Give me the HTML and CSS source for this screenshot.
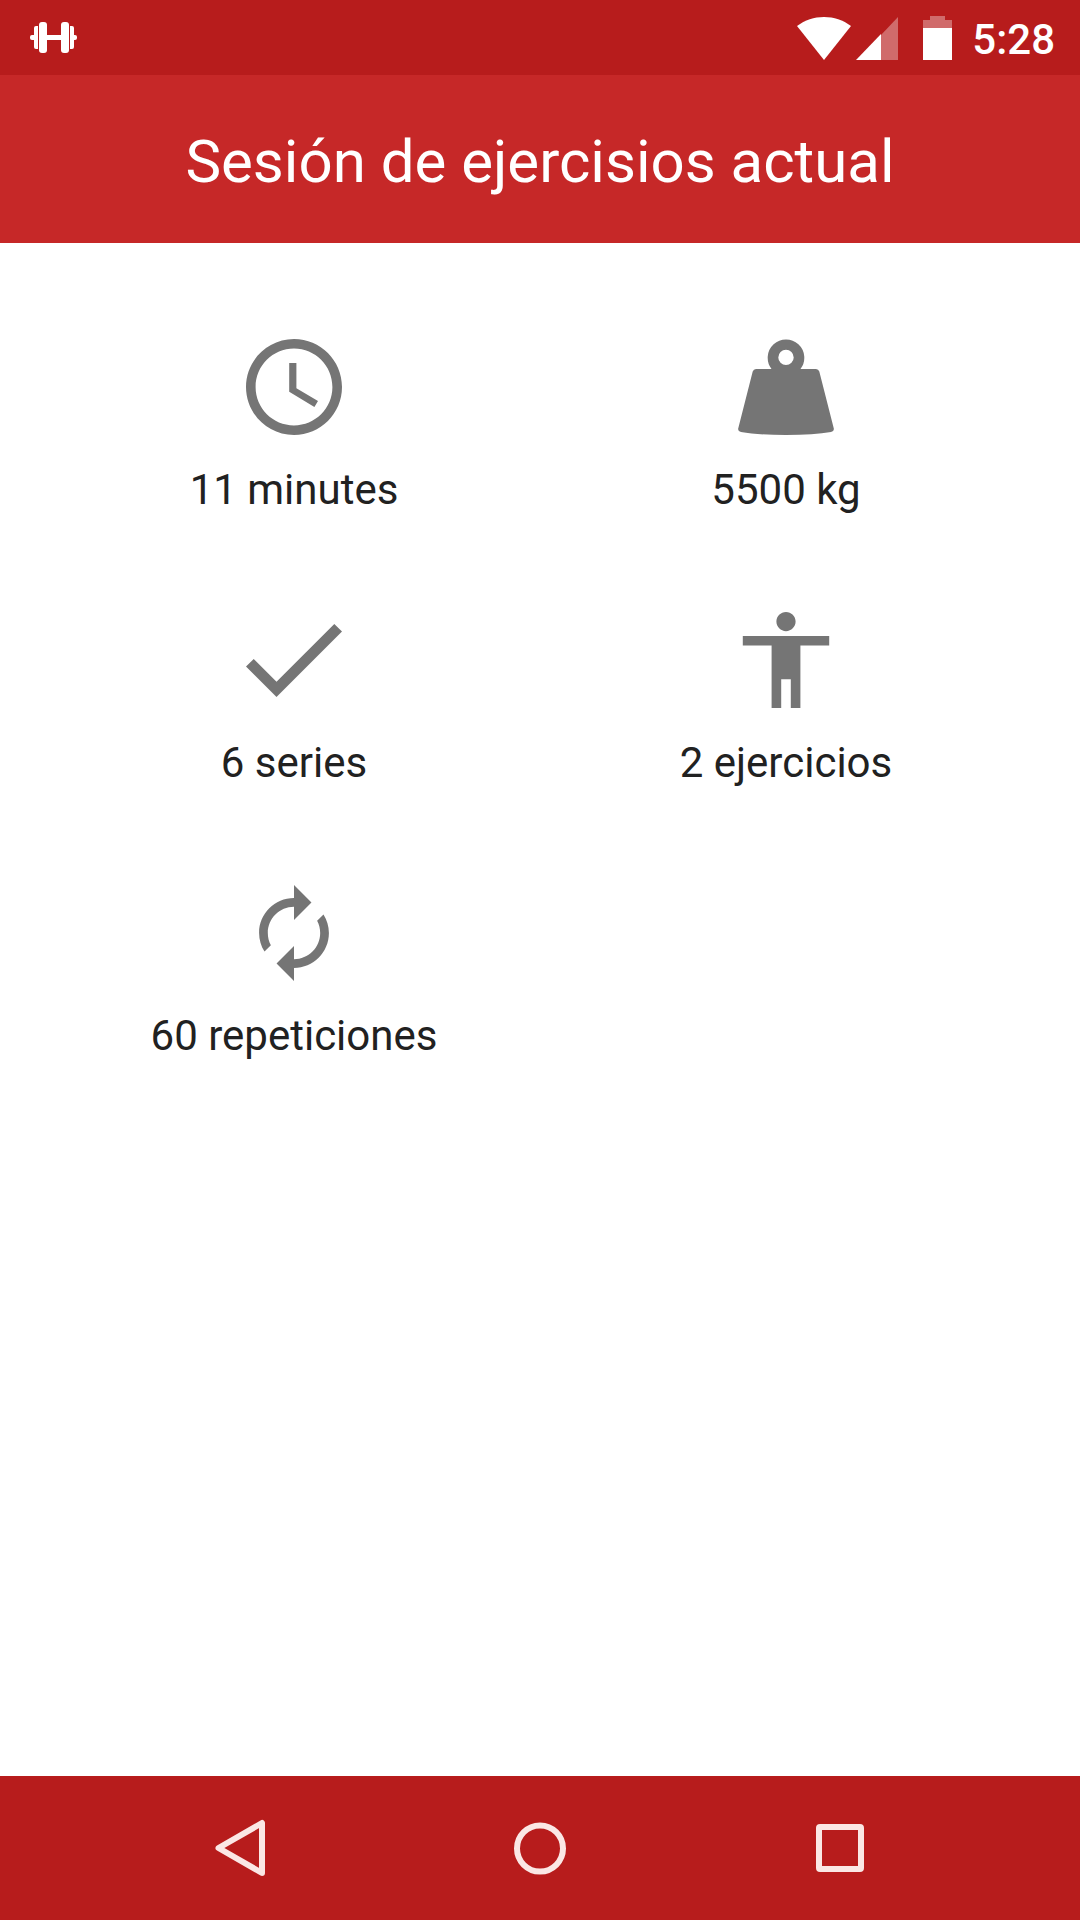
FILE: index.html
```html
<!DOCTYPE html>
<html lang="es">
<head>
<meta charset="utf-8">
<meta name="viewport" content="width=device-width, initial-scale=1">
<title>Sesión de ejercisios actual</title>
<link rel="stylesheet" href="styles.css">
</head>
<body>
<div class="screen">
  <div class="status-bar">
    <svg class="status-dumbbell" viewBox="0 0 48 32" aria-hidden="true">
      <rect x="0" y="13" width="47" height="5" rx="2"/>
      <rect x="4" y="4" width="40" height="23" rx="2"/>
      <rect class="cutout" x="8" y="0" width="32" height="32"/>
      <rect x="9" y="0" width="8" height="31" rx="3"/>
      <rect x="31" y="0" width="8" height="31" rx="3"/>
      <rect x="16" y="13" width="16" height="5"/>
    </svg>
    <div class="status-info">
      <svg class="status-wifi" viewBox="0 0 54 44" aria-hidden="true">
        <path d="M27 44 0 10C8 4 17 1 27 1s19 3 27 9z"/>
      </svg>
      <svg class="status-signal" viewBox="0 0 42 44" aria-hidden="true">
        <path class="dim" d="M25 19 42 1v43H25z"/>
        <path d="M0 44 25 18v26z"/>
      </svg>
      <svg class="status-battery" viewBox="0 0 29 44" aria-hidden="true">
        <path class="dim" d="M7 0h15v4h7v8H0V4h7z"/>
        <path d="M0 12h29v32H0z"/>
      </svg>
      <time class="status-time">5:28</time>
    </div>
  </div>

  <header class="app-bar">
    <h1 class="app-title">Sesión de ejercisios actual</h1>
  </header>

  <main class="content">
    <ul class="stats">
      <li class="stat">
        <svg class="stat-icon" viewBox="2 2 20 20" aria-hidden="true">
          <path d="M12 2C6.480 2 2 6.480 2 12s4.480 10 10 10 10-4.480 10-10S17.520 2 12 2zm0 18c-4.420 0-8-3.580-8-8s3.580-8 8-8 8 3.580 8 8-3.580 8-8 8zM12.500 7H11v6l5.250 3.150.75-1.230-4.500-2.670z"/>
        </svg>
        <span class="stat-label">11 minutes</span>
      </li>
      <li class="stat">
        <svg class="stat-icon" viewBox="0 0 96 96" aria-hidden="true">
          <path fill-rule="evenodd" d="M33.500 30A18.300 18.300 0 1 1 62.500 30H78Q80.500 30 81.300 32.500L95.800 89.500Q96.300 92 93 93Q76 96 48 96T3 93Q-.3 92 .2 89.500L14.700 32.500Q15.500 30 18 30zM48 10.700a7.700 7.700 0 1 0 0 15.400a7.700 7.700 0 1 0 0-15.400z"/>
        </svg>
        <span class="stat-label">5500 kg</span>
      </li>
      <li class="stat">
        <svg class="stat-icon" viewBox="3.410 3.410 17.590 17.590" aria-hidden="true">
          <path d="M9 16.170 4.830 12l-1.420 1.410L9 19 21 7l-1.410-1.410z"/>
        </svg>
        <span class="stat-label">6 series</span>
      </li>
      <li class="stat">
        <svg class="stat-icon" viewBox="2 2 20 20" aria-hidden="true">
          <path d="M12 2c1.100 0 2 .9 2 2s-.9 2-2 2-2-.9-2-2 .9-2 2-2zm9 7h-6v13h-2v-6h-2v6H9V9H3V7h18v2z"/>
        </svg>
        <span class="stat-label">2 ejercicios</span>
      </li>
      <li class="stat">
        <svg class="stat-icon" viewBox="1 1 22 22" aria-hidden="true">
          <path d="M12 6v3l4-4-4-4v3c-4.420 0-8 3.580-8 8 0 1.570.46 3.030 1.240 4.260L6.700 14.800c-.45-.83-.7-1.790-.7-2.800 0-3.310 2.690-6 6-6zm6.760 1.740L17.300 9.200c.44.84.7 1.790.7 2.800 0 3.310-2.690 6-6 6v-3l-4 4 4 4v-3c4.420 0 8-3.580 8-8 0-1.570-.46-3.030-1.240-4.260z"/>
        </svg>
        <span class="stat-label">60 repeticiones</span>
      </li>
    </ul>
  </main>

  <nav class="nav-bar">
    <button class="nav-button" type="button" aria-label="Atrás">
      <svg class="nav-icon" viewBox="0 0 60 60" aria-hidden="true"><path d="M52 5v50L8.500 30z"/></svg>
    </button>
    <button class="nav-button" type="button" aria-label="Inicio">
      <svg class="nav-icon" viewBox="0 0 60 60" aria-hidden="true"><circle cx="30" cy="30.500" r="23"/></svg>
    </button>
    <button class="nav-button" type="button" aria-label="Recientes">
      <svg class="nav-icon" viewBox="0 0 60 60" aria-hidden="true"><rect x="9" y="9" width="42" height="42" rx="1"/></svg>
    </button>
  </nav>
</div>
</body>
</html>
```

FILE: styles.css
```css
* {
  box-sizing: border-box;
}

body {
  margin: 0;
  background: #fff;
  color: #212121;
  font-family: Roboto, "Liberation Sans", sans-serif;
}

.screen {
  display: flex;
  flex-direction: column;
  min-height: 100vh;
}

/* Status bar */
.status-bar {
  display: flex;
  align-items: center;
  justify-content: space-between;
  height: 75px;
  padding: 0 25px 0 30px;
  background: #b71c1c;
  color: #fff;
  fill: #fff;
}

.status-dumbbell {
  width: 48px;
  height: 32px;
}

.cutout {
  fill: #b71c1c;
}

.dim {
  opacity: 0.35;
}

.status-info {
  display: flex;
  align-items: flex-end;
}

.status-wifi {
  width: 54px;
  height: 44px;
  margin-right: 5px;
}

.status-signal {
  width: 42px;
  height: 44px;
  margin-right: 25px;
}

.status-battery {
  width: 29px;
  height: 44px;
  margin-right: 20px;
}

.status-time {
  font-size: 42px;
  font-weight: 500;
  line-height: 40px;
}

/* Title bar */
.app-bar {
  padding: 52px 48px 46px;
  background: #c62828;
  color: #fff;
}

.app-title {
  margin: 0;
  font-size: 60px;
  font-weight: 400;
  line-height: 70px;
  text-align: center;
}

/* Session figures */
.content {
  flex: 1;
  padding: 96px 48px;
}

.stats {
  display: grid;
  grid-template-columns: 1fr 1fr;
  row-gap: 98px;
  margin: 0;
  padding: 0;
  list-style: none;
}

.stat {
  display: flex;
  flex-direction: column;
  align-items: center;
  gap: 30px;
}

.stat-icon {
  width: 96px;
  height: 96px;
  fill: #757575;
}

.stat-label {
  font-size: 42px;
  line-height: 49px;
}

/* Navigation bar */
.nav-bar {
  display: grid;
  grid-template-columns: repeat(3, 1fr);
  height: 144px;
  padding: 0 90px;
  background: #b71c1c;
}

.nav-button {
  display: flex;
  align-items: center;
  justify-content: center;
  padding: 0;
  border: 0;
  background: none;
}

.nav-icon {
  width: 60px;
  height: 60px;
  fill: none;
  stroke: #fbe7e5;
  stroke-width: 6px;
  stroke-linejoin: round;
}
```
